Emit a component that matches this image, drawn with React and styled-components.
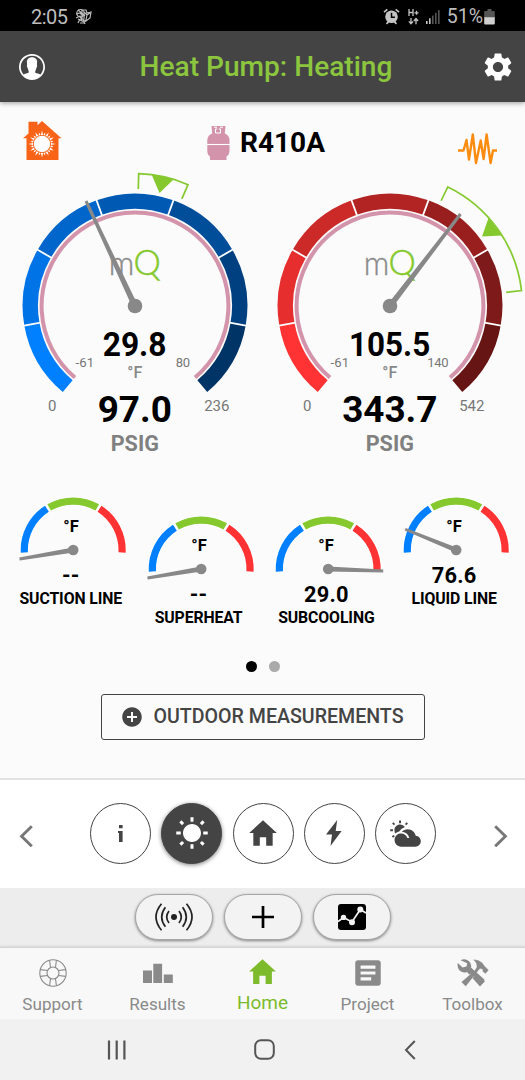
import React from "react";
import styled, { createGlobalStyle, css } from "styled-components";
import {
  IoIosContact,
  IoMdAddCircle,
  IoMdHome,
  IoMdListBox,
  IoMdPartlySunny,
  IoMdSunny,
} from "react-icons/io";
import { MdSettings } from "react-icons/md";

const GlobalStyle = createGlobalStyle`
  *, *::before, *::after { box-sizing: border-box; }
  body {
    margin: 0;
    background: #fbfbfb;
    font-family: Roboto, "Liberation Sans", sans-serif;
  }
  button { font: inherit; margin: 0; padding: 0; cursor: pointer; }
  svg { display: block; flex: none; }
`;

const Screen = styled.div`
  display: flex;
  flex-direction: column;
  width: 525px;
  height: 1080px;
  overflow: hidden;
  background: #fbfbfb;
`;

const StatusBar = styled.div`
  display: flex;
  align-items: center;
  justify-content: space-between;
  flex: none;
  height: 31px;
  padding: 2px 30px 0 31px;
  background: #000;
  color: #bdbdbd;
  font-size: 20px;
`;

const StatusGroup = styled.div`
  display: flex;
  align-items: center;
`;

const Clock = styled.span`
  margin-right: 7px;
  letter-spacing: -0.5px;
`;

const Spacer = styled.span`
  width: ${(p) => p.$w}px;
`;

const Battery = styled.span`
  margin: 0 1px 0 7px;
  font-size: 19.5px;
`;

const Header = styled.header`
  display: flex;
  align-items: center;
  justify-content: space-between;
  flex: none;
  height: 71px;
  padding: 0 10px 0 16px;
  background: #444;
  color: #fff;
  box-shadow: 0 1px 5px rgba(0, 0, 0, 0.4);
  z-index: 1;
`;

const Title = styled.h1`
  margin: 0;
  padding-left: 3px;
  color: #8cc63f;
  font-size: 28.1px;
  font-weight: 500;
  line-height: 32px;
`;

const Content = styled.main`
  display: flex;
  flex-direction: column;
  flex: none;
  height: 676px;
`;

const SystemRow = styled.div`
  display: flex;
  justify-content: space-between;
  align-items: flex-start;
  height: 68px;
  padding: 19px 28px 0 23px;
`;

const Refrigerant = styled.div`
  display: flex;
  align-items: center;
  gap: 10px;
  padding: 5px 0 0 12px;
  font-size: 28px;
  font-weight: 700;
  line-height: 34px;
`;

const WaveHolder = styled.div`
  padding-top: 12px;
`;

const PressureRow = styled.div`
  display: grid;
  grid-template-columns: 255px 255px;
  justify-content: start;
  padding-left: 7px;
  height: 290px;
`;

const DialSvg = styled.svg`
  overflow: visible;
`;

const ProbeRow = styled.div`
  display: grid;
  grid-template-columns: repeat(4, 127.8px);
  padding: 36px 0 0 6.9px;
  height: 188px;
`;

const Probe = styled.div`
  display: flex;
  flex-direction: column;
  align-items: center;
  padding-top: ${(p) => (p.$lowered ? 19.4 : 0)}px;
`;

const ProbeValue = styled.div`
  margin-top: 1px;
  font-size: 21.8px;
  font-weight: 700;
  line-height: 24px;
  letter-spacing: 0.2px;
`;

const ProbeLabel = styled.div`
  font-size: 15.8px;
  font-weight: 700;
  line-height: 21px;
  letter-spacing: -0.1px;
  white-space: nowrap;
`;

const Pager = styled.div`
  display: flex;
  justify-content: center;
  gap: 12px;
  padding-top: 13px;
`;

const Dot = styled.span`
  width: 11px;
  height: 11px;
  border-radius: 50%;
  background: ${(p) => (p.$active ? "#000" : "#aaa")};
`;

const OutdoorButton = styled.button`
  && {
    display: flex;
    align-items: center;
    gap: 9.5px;
    align-self: center;
    width: 324px;
    height: 46px;
    margin-top: 22px;
    margin-left: 1px;
    padding: 0 0 1px 18px;
    border: 1px solid #444;
    border-radius: 3px;
    background: transparent;
    color: #444;
    font-size: 19.6px;
    font-weight: 500;
    white-space: nowrap;
  }
`;

const CategoryBar = styled.div`
  display: flex;
  align-items: center;
  justify-content: space-between;
  flex: none;
  height: 110px;
  padding: 0 17px 2px 19px;
  border-top: 2px solid #e2e2e2;
  background: #fff;
`;

const CategoryList = styled.div`
  display: flex;
  gap: 10.2px;
  padding-right: 1px;
`;

const Category = styled.button`
  display: flex;
  align-items: center;
  justify-content: center;
  width: 61px;
  height: 61px;
  border: 1px solid #444;
  border-radius: 50%;
  background: #fff;
  color: #444;
  ${(p) =>
    p.$active &&
    css`
      background: #444;
      color: #fff;
      box-shadow: 0 1px 4px rgba(0, 0, 0, 0.5);
    `}
`;

const ActionBar = styled.div`
  display: flex;
  justify-content: center;
  align-items: flex-start;
  gap: 11px;
  flex: none;
  height: 59px;
  padding-top: 6px;
  background: #ededed;
`;

const Action = styled.button`
  display: flex;
  align-items: center;
  justify-content: center;
  width: 78px;
  height: 46px;
  border: 1px solid #a6a6a6;
  border-radius: 23px;
  background: #f3f3f3;
  box-shadow: 0 1px 3px rgba(0, 0, 0, 0.45);
  color: #000;
`;

const Tabs = styled.nav`
  display: grid;
  grid-template-columns: repeat(5, 1fr);
  flex: none;
  height: 72px;
  background: #f8f8f8;
  border-top: 1px solid #d4d4d4;
  box-shadow: 0 -1px 2px rgba(0, 0, 0, 0.1);
`;

const Tab = styled.a`
  display: flex;
  flex-direction: column;
  align-items: center;
  padding-top: ${(p) => (p.$active ? 7 : 8)}px;
  color: ${(p) => (p.$active ? "#7dbb2c" : "#8a8a8a")};
  font-size: ${(p) => (p.$active ? 19 : 17.1)}px;
`;

const TabIcon = styled.span`
  display: flex;
  align-items: center;
  justify-content: center;
  height: 33px;
`;

const TabLabel = styled.span`
  line-height: 24px;
  margin-top: 3px;
`;

const SystemNav = styled.div`
  display: flex;
  align-items: center;
  justify-content: space-between;
  flex: none;
  height: 61px;
  padding: 0 109px 0 107px;
  background: #f1f1f1;
`;

const HomeKeyHolder = styled.span`
  padding-right: 4px;
`;

const polar = (r, deg) => {
  const a = (deg * Math.PI) / 180;
  return [r * Math.sin(a), -r * Math.cos(a)];
};
const point = (r, deg) => polar(r, deg).map((v) => v.toFixed(2)).join(" ");
const arc = (r, from, to) =>
  `M${point(r, from)}A${r} ${r} 0 ${to - from > 180 ? 1 : 0} 1 ${point(r, to)}`;

const Needle = ({ tip, base, end, hub }) => {
  const [x, y] = tip;
  const len = Math.hypot(x, y);
  const nx = -y / len;
  const ny = x / len;
  const pts = [
    [nx * base, ny * base],
    [x + nx * end, y + ny * end],
    [x - nx * end, y - ny * end],
    [-nx * base, -ny * base],
  ];
  return (
    <g fill="#888">
      <polygon points={pts.map((p) => p.join(",")).join(" ")} />
      <circle r={hub} />
    </g>
  );
};

const PressureDial = ({ colors, tip, target, marker, temp, tempMax, pressure, max }) => (
  <DialSvg width="255" height="290" viewBox="-128 -136 255 290">
    {colors.map((c, i) => (
      <path key={c} d={arc(104.7, -140 + i * 40, -100 + i * 40)} fill="none" stroke={c} strokeWidth="15.4" />
    ))}
    {[-100, -60, -20, 20, 60, 100].map((a) => (
      <path key={a} d={`M${point(96, a)}L${point(114, a)}`} stroke="#fff" strokeWidth="1.8" />
    ))}
    <path d={arc(93.4, -140, 140)} fill="none" stroke="#d394ab" strokeWidth="4" />
    <path
      d={`M${point(117, target[0])}L${point(132.4, target[0])}A132.4 132.4 0 0 1 ${point(132.4, target[1])}L${point(117, target[1])}`}
      fill="none"
      stroke="#85c92f"
      strokeWidth="1.7"
    />
    <polygon points={marker} fill="#85c92f" />
    <g fontFamily="Lato" fontWeight="300">
      <text x="-26.3" y="-31" fontSize="34" fill="#8a8a8a" stroke="#8a8a8a" strokeWidth="0.4" textLength="25.5" lengthAdjust="spacingAndGlyphs">m</text>
      <text x="-1.6" y="-31.4" fontSize="34.5" fill="#85c92f" stroke="#85c92f" strokeWidth="0.5">Q</text>
    </g>
    <Needle tip={tip} base={2.9} end={1.5} hub={7.3} />
    <g textAnchor="middle" fontWeight="700">
      <text x="-0.4" y="49.5" fontSize="32.3" textLength={temp.length > 4 ? 81.3 : 63.8} lengthAdjust="spacingAndGlyphs">{temp}</text>
      <text x="-0.2" y="116.3" fontSize="36.9">{pressure}</text>
      <text x="-0.2" y="144.6" fontSize="21.6" fill="#808080">PSIG</text>
      <text x="-0.2" y="72.2" fontSize="16" fontWeight="500" fill="#888">°F</text>
    </g>
    <g textAnchor="middle" fill="#777">
      <text x="-50.2" y="61.3" fontSize="13.2">-61</text>
      <text x="47.8" y="61.3" fontSize="13" letterSpacing="-0.3">{tempMax}</text>
      <text x="-82.7" y="104.6" fontSize="15">0</text>
      <text x="81.8" y="104.6" fontSize="15">{max}</text>
    </g>
  </DialSvg>
);

const ProbeDial = ({ tip }) => (
  <DialSvg width="128" height="67" viewBox="-66.2 -54 128 67">
    <path d={arc(48.9, -94, 94)} fill="none" stroke="#fff" strokeWidth="9.4" />
    <path d={arc(48.9, -93, -32.5)} fill="none" stroke="#0080ff" strokeWidth="7.2" />
    <path d={arc(48.9, -29.5, 29.5)} fill="none" stroke="#85c92f" strokeWidth="7.2" />
    <path d={arc(48.9, 32.5, 93)} fill="none" stroke="#ff3333" strokeWidth="7.2" />
    <text x="-2.2" y="-17.6" fontSize="16.5" fontWeight="700" textAnchor="middle">°F</text>
    <Needle tip={tip} base={2.5} end={1.4} hub={5.3} />
  </DialSvg>
);

const StatusArt = () => (
  <svg width="17" height="18" viewBox="0 0 17 18" fill="none" stroke="#bdbdbd" strokeWidth="1.2">
    <circle cx="5.5" cy="5.2" r="3.7" />
    <path d="M1 6l4-1 3 3M3 2l5 4M1 10l4-2 2 5-4-2M7 2l4 0 1 3 4-1-1 6-4 3-4-2zM9 4l3 3 3-2M10 8l-2-2M5 11l-2 4M8 12l2 4M11 12l-2 3M5 15h4M9 6v5M12 7l-1 5" />
  </svg>
);

const AlarmIcon = () => (
  <svg width="17" height="17" viewBox="0 0 17 17" fill="none">
    <circle cx="8.5" cy="8.8" r="6.3" fill="#c4c4c4" />
    <path d="M1 4.2L4.3 1.4M16 4.2L12.7 1.4M3.5 15.8l2-2M13.5 15.8l-2-2" stroke="#c4c4c4" strokeWidth="1.7" />
    <path d="M8.5 4.8v4.4h3.4" stroke="#000" strokeWidth="1.5" />
  </svg>
);

const NetworkIcon = () => (
  <svg width="11" height="16" viewBox="0 0 11 16" fill="none" stroke="#c4c4c4" strokeWidth="1.3">
    <path d="M1 0v7M5 0v7M1 3.5h4M6.5 3.8h4M8.5 1.8v4" />
    <path d="M3 9v5.5M.9 12.4L3 14.8l2.1-2.4M8 15.2V9.8M5.9 12L8 9.5l2.1 2.5" />
  </svg>
);

const SignalIcon = () => (
  <svg width="14" height="14" viewBox="0 0 14 14">
    {[0, 1, 2, 3, 4].map((i) => (
      <rect key={i} x={i * 3} y={11 - i * 2.7} width="1.6" height={3 + i * 2.7} fill={i < 2 ? "#c4c4c4" : "#555"} />
    ))}
  </svg>
);

const BatteryIcon = () => (
  <svg width="11" height="16" viewBox="0 0 11 16">
    <path d="M3.5 0h4v2h-4zM1 2h9q.8 0 .8 1v6H.2V3q0-1 .8-1z" fill="#555" />
    <path d="M.2 8.3h10.6V14.6q0 1-1 1H1.2q-1 0-1-1z" fill="#d0d0d0" />
  </svg>
);

const HeatedHouseIcon = () => (
  <svg width="39" height="39" viewBox="0 0 39 39">
    <path d="M19 0l19.5 17.3h-3V39h-32V17.3H0L5.5 12.4V.8h9v3.5z" fill="#f96317" />
    <circle cx="19" cy="23" r="8.2" fill="#fff" />
    {Array.from({ length: 24 }, (_, i) => (
      <polygon key={i} points={i % 2 ? "-1,-9 1,-9 0,-12" : "-1.1,-9 1.1,-9 0,-13.6"} fill="#fff" transform={`translate(19 23) rotate(${i * 15})`} />
    ))}
  </svg>
);

const TankIcon = () => (
  <svg width="23" height="34" viewBox="0 0 23 34">
    <path d="M4.5 0H18.5L17.8 7.6Q22.3 9.5 22.5 14V25Q22.3 29 19.5 30.5V34H3V30.5Q.4 29 .3 25V14Q.6 9.5 5.2 7.6z" fill="#d394ab" />
    <path d="M8.5 3h5v4h-5zM7 1.2h3M13 1.2h3" fill="none" stroke="#fff" strokeWidth="1" />
    <path d="M10.3 0h1.6v5h-1.6z" fill="#d394ab" />
    <path d="M0 18.5h23" stroke="#fff" strokeWidth="1.1" />
  </svg>
);

const WaveIcon = () => (
  <svg width="39" height="32" viewBox="0 0 39 32" fill="none" stroke="#fb8c10" strokeWidth="2.4" strokeLinejoin="round">
    <path d="M0 17.5h5.5L8.5 7 11 26.5 14.8 1.5 18 30 22.7 7.5 25.6 26 28.6 1.5 32.6 30 35 17.5h4" />
  </svg>
);

const ArrowIcon = ({ flip }) => (
  <svg width="15" height="28" viewBox="0 0 15 28" fill="none" stroke="#777" strokeWidth="2.9" transform={flip ? "scale(-1 1)" : undefined}>
    <path d="M12.8 7.2L2.6 17.3 12.8 27.3" />
  </svg>
);

const InfoIcon = () => (
  <svg width="6" height="17" viewBox="0 0 6 17" fill="#444">
    <path d="M1 0h3.6v3.2H1zM1 6h3.6v11H1zM0 6h2v2H0z" />
  </svg>
);

const BoltIcon = () => (
  <svg width="16" height="26" viewBox="0 0 16 26" fill="#444">
    <path d="M11.2 0L0 14.5h6L4.5 26 15.6 11H9.7z" />
  </svg>
);

const BroadcastIcon = () => (
  <svg width="40" height="30" viewBox="-20 -15 40 30" fill="none" stroke="#222" strokeWidth="1.7">
    <circle r="3" fill="#222" stroke="none" />
    {[1, -1].map((s) => (
      <path key={s} transform={`scale(${s} 1)`} d="M5 -6Q9.6 0 5 6M8.6 -9.7Q16 0 8.6 9.7M12.5 -13.3Q23.5 0 12.5 13.3" />
    ))}
  </svg>
);

const PlusIcon = () => (
  <svg width="24" height="24" viewBox="0 0 24 24" stroke="#000" strokeWidth="2.7">
    <path d="M12 1v22M1 12h22" />
  </svg>
);

const TrendIcon = () => (
  <svg width="28" height="26" viewBox="0 0 28 26">
    <rect width="28" height="26" rx="3" fill="#000" />
    <path d="M0 17.5L5.5 13.5 14 18 22.3 5.5 28 9" fill="none" stroke="#f3f3f3" strokeWidth="1.7" />
    <g fill="#f3f3f3">
      <circle cx="5.5" cy="13.4" r="2.7" />
      <circle cx="14" cy="18.2" r="3" />
      <circle cx="22.3" cy="5.5" r="3" />
    </g>
  </svg>
);

const BuoyIcon = () => (
  <svg width="28" height="28" viewBox="-14 -14 28 28" fill="none" stroke="#8a8a8a" strokeWidth="1.1">
    <circle r="13.2" />
    <circle r="6" />
    {[0, 90, 180, 270].map((a) => (
      <path key={a} transform={`rotate(${a})`} d="M-2.5 -5.5L-3.4 -12.7M2.5 -5.5L3.4 -12.7" />
    ))}
  </svg>
);

const BarsIcon = () => (
  <svg width="30" height="28" viewBox="0 0 30 28" fill="#8a8a8a">
    <path d="M0 11.5h9V24H0zM10.3 4.7h8.8V24h-8.800zM20.800 15.600h9V24h-9z" />
  </svg>
);

const ToolboxIcon = () => (
  <svg width="32" height="28" viewBox="0 0 32 28" fill="#8a8a8a">
    <path d="M3.6 1.2Q8 -.8 11.8 2Q15 4.8 14 8.8L28 22.2L23 27.6L10 13Q6 14.5 2.6 11.5Q-.2 8.6 .8 4L5.6 8.4L9.5 7.4L10.2 4.2z" />
    <path d="M15.8 .6Q21 -.3 25 3.3L28.2 7.6L29.3 8.4L31.8 11.2L28.4 15L25.6 12.6L25.2 10.2L22.8 9.9L8.8 27.6L4.2 23L17.5 11.5L19.5 8.2Q20 3.6 15.8 .6z" stroke="#f8f8f8" strokeWidth="0.5" />
    <path d="M12 10L26 22.2" stroke="#8a8a8a" strokeWidth="4.5" />
  </svg>
);

const RecentsIcon = () => (
  <svg width="21" height="20" viewBox="0 0 21 20" stroke="#555" strokeWidth="2.2">
    <path d="M2 .5v19M9.700 .5v19M17.400 .5v19" />
  </svg>
);

const HomeKeyIcon = () => (
  <svg width="21" height="21" viewBox="0 0 21 21" fill="none" stroke="#555" strokeWidth="2">
    <rect x="1.2" y="1.2" width="18.6" height="18.6" rx="5.8" />
  </svg>
);

const BackIcon = () => (
  <svg width="12" height="20" viewBox="0 0 12 20" fill="none" stroke="#555" strokeWidth="2">
    <path d="M10.800 1L2 10 10.800 19" />
  </svg>
);

const BLUES = ["#0080ff", "#0073e6", "#0066cc", "#0059b3", "#004d99", "#004080", "#003366"];
const REDS = ["#ff3333", "#e62e2e", "#cc2929", "#b22424", "#991f1f", "#7f1a1a", "#661414"];

const PROBES = [
  { label: "SUCTION LINE", value: "--", tip: [-53.7, 9] },
  { label: "SUPERHEAT", value: "--", tip: [-53.7, 9], lowered: true },
  { label: "SUBCOOLING", value: "29.0", tip: [55, 2], lowered: true },
  { label: "LIQUID LINE", value: "76.6", tip: [-51, -20.8] },
];

const CATEGORIES = [
  { id: "info", icon: <InfoIcon /> },
  { id: "outdoor", icon: <IoMdSunny size={36} />, active: true },
  { id: "indoor", icon: <IoMdHome size={34} /> },
  { id: "electrical", icon: <BoltIcon /> },
  { id: "weather", icon: <IoMdPartlySunny size={35} /> },
];

const TABS = [
  { label: "Support", icon: <BuoyIcon /> },
  { label: "Results", icon: <BarsIcon /> },
  { label: "Home", icon: <IoMdHome size={33} />, active: true },
  { label: "Project", icon: <IoMdListBox size={34} /> },
  { label: "Toolbox", icon: <ToolboxIcon /> },
];

export default function App() {
  return (
    <>
      <GlobalStyle />
      <Screen>
        <StatusBar>
          <StatusGroup>
            <Clock>2:05</Clock>
            <StatusArt />
          </StatusGroup>
          <StatusGroup>
            <AlarmIcon />
            <Spacer $w={8} />
            <NetworkIcon />
            <Spacer $w={7} />
            <SignalIcon />
            <Battery>51%</Battery>
            <BatteryIcon />
          </StatusGroup>
        </StatusBar>
        <Header>
          <IoIosContact size={32} />
          <Title>Heat Pump: Heating</Title>
          <MdSettings size={34} />
        </Header>
        <Content>
          <SystemRow>
            <HeatedHouseIcon />
            <Refrigerant>
              <TankIcon />
              R410A
            </Refrigerant>
            <WaveHolder>
              <WaveIcon />
            </WaveHolder>
          </SystemRow>
          <PressureRow>
            <PressureDial
              colors={BLUES}
              tip={[-49, -105]}
              target={[1.6, 23.6]}
              marker="16.5,-131.7 39,-127 24.5,-113"
              temp="29.8"
              tempMax="80"
              pressure="97.0"
              max="236"
            />
            <PressureDial
              colors={REDS}
              tip={[70.5, -92]}
              target={[25.9, 83.3]}
              marker="98.5,-88 112,-70.5 92,-69.5"
              temp="105.5"
              tempMax="140"
              pressure="343.7"
              max="542"
            />
          </PressureRow>
          <ProbeRow>
            {PROBES.map((p) => (
              <Probe key={p.label} $lowered={p.lowered}>
                <ProbeDial tip={p.tip} />
                <ProbeValue>{p.value}</ProbeValue>
                <ProbeLabel>{p.label}</ProbeLabel>
              </Probe>
            ))}
          </ProbeRow>
          <Pager>
            <Dot $active />
            <Dot />
          </Pager>
          <OutdoorButton>
            <IoMdAddCircle size={24} />
            OUTDOOR MEASUREMENTS
          </OutdoorButton>
        </Content>
        <CategoryBar>
          <ArrowIcon />
          <CategoryList>
            {CATEGORIES.map((c) => (
              <Category key={c.id} $active={c.active} aria-label={c.id}>
                {c.icon}
              </Category>
            ))}
          </CategoryList>
          <ArrowIcon flip />
        </CategoryBar>
        <ActionBar>
          <Action aria-label="sensors"><BroadcastIcon /></Action>
          <Action aria-label="add"><PlusIcon /></Action>
          <Action aria-label="trends"><TrendIcon /></Action>
        </ActionBar>
        <Tabs>
          {TABS.map((t) => (
            <Tab key={t.label} $active={t.active}>
              <TabIcon>{t.icon}</TabIcon>
              <TabLabel>{t.label}</TabLabel>
            </Tab>
          ))}
        </Tabs>
        <SystemNav>
          <RecentsIcon />
          <HomeKeyHolder>
            <HomeKeyIcon />
          </HomeKeyHolder>
          <BackIcon />
        </SystemNav>
      </Screen>
    </>
  );
}
